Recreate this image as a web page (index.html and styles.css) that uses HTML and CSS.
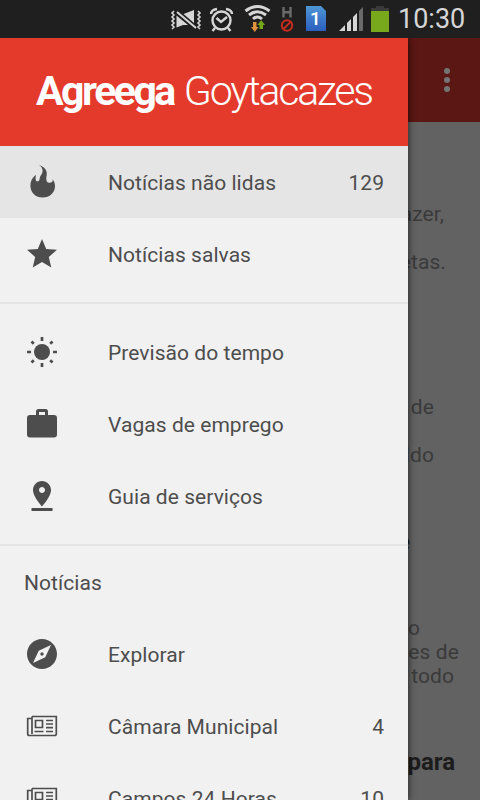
FILE: index.html
```html
<!DOCTYPE html>
<html lang="pt-BR">
<head>
    <meta charset="UTF-8">
    <meta name="viewport" content="width=device-width, initial-scale=1.0">
    <title>Agreega Goytacazes</title>
    <link rel="stylesheet" href="styles.css">
</head>
<body>

    <!-- Status bar -->
    <div class="status-bar">
        <svg class="status-icons" width="222" height="38" viewBox="168 0 222 38">
            <!-- Vibrate / muted -->
            <g fill="none" stroke="#d6d6d6" stroke-width="1.600">
                <path d="M174 11l-2 2 2 2-2 2 2 2-2 2 2 2-2 2 2 2-2 2M198 11l2 2-2 2 2 2-2 2 2 2-2 2 2 2-2 2 2 2"/>
                <path d="M177 12l19 16" stroke-width="2"/>
            </g>
            <path fill="#d6d6d6" d="M176.500 15.500L188 25h-5l-6.500 2.500zM183.500 14l10.500-4v13z"/>
            <!-- Alarm -->
            <g fill="none" stroke="#d6d6d6" stroke-width="2.400">
                <circle cx="221.500" cy="20.500" r="9"/>
                <path d="M216.500 18l4.500 4 6-5M211 14q0-4 6-5M232 14q0-4-6-5M215 28l-2.500 3M228 28l2.500 3"/>
            </g>
            <!-- Wifi -->
            <g fill="none" stroke="#d6d6d6" stroke-width="3">
                <path d="M245.500 11q12-9 24 0M249 15q8.500-6.500 17 0M253 19q4.500-4 9 0"/>
            </g>
            <path fill="#e0913b" d="M253 22h3.500v5h2l-3.700 5-3.800-5h2z"/>
            <path fill="#74a818" d="M259.500 29h3.500v-4h2l-3.800-5-3.700 5h2z"/>
            <!-- Network type -->
            <path d="M283.500 7v10.500M290.500 7v10.500M283.500 12.200h7" fill="none" stroke="#6a6a6a" stroke-width="2.400"/>
            <g fill="none" stroke="#c52c1e" stroke-width="2">
                <circle cx="287" cy="25.500" r="5.200"/>
                <path d="M283.500 29l7-7"/>
            </g>
            <!-- SIM card -->
            <defs>
                <linearGradient id="sim" x1="0" y1="0" x2="0" y2="1">
                    <stop offset="0" stop-color="#4e95d6"/>
                    <stop offset="1" stop-color="#2b5fbd"/>
                </linearGradient>
            </defs>
            <path fill="url(#sim)" d="M306 6h15l5 5v20h-20z"/>
            <text class="sim-number" x="315.500" y="25" text-anchor="middle">1</text>
            <!-- Signal -->
            <path fill="#d6d6d6" d="M339 31l6-6v6zM347 31v-8l4-4v12zM353 31V17l4-4v18z"/>
            <path fill="#6a6a6a" d="M359 31V11l4-4v24z"/>
            <!-- Battery -->
            <path fill="#3a3a3a" d="M371 11V8h5V6h8v2h5v3z"/>
            <path fill="#78a81b" d="M371 11h18v21h-18z"/>
        </svg>
        <div class="clock">10:30</div>
    </div>

    <div class="screen">
        <!-- News page -->
        <div class="toolbar">
            <svg width="6" height="26" viewBox="0 0 6 26" fill="#747474">
                <circle cx="3" cy="4" r="3"/>
                <circle cx="3" cy="13" r="3"/>
                <circle cx="3" cy="22" r="3"/>
            </svg>
        </div>
        <div class="feed">
            <p class="story story-first">azer,<br><span>etas.</span></p>
            <p class="story story-second">de<br>ldo</p>
            <h2 class="title title-first">e</h2>
            <p class="summary"><span class="short">o</span><br>es de<br><span class="todo">todo</span></p>
            <h2 class="title title-second">para</h2>
        </div>

        <!-- Drawer -->
        <div class="drawer">
            <div class="brand"><b>Agreega</b><span>Goytacazes</span></div>
            <div class="menu">
                <div class="menu-item active">
                    <svg class="icon" viewBox="0 0 36 36"><path d="M15 1C20.500 3 23.500 6.500 22.700 11 22 15 22 18.500 25 18.800 27.500 19 29 17.800 28.700 15.500 30.300 17.300 31 19.500 31 22 31 28.700 25.700 33.600 18.700 33.600S6.400 28.700 6.400 21.500C6.400 17 8.300 13.500 12 10.700 11.500 13.500 11 17.300 13.500 17.300 15.700 17.300 15.500 15 16 13 16.500 11 18.500 10 18.600 7 18.700 4.500 17.500 2.500 15 1z"/></svg>
                    <span class="label">Notícias não lidas</span>
                    <span class="count">129</span>
                </div>
                <div class="menu-item">
                    <svg class="icon" viewBox="0 0 24 24"><path d="M12 17.270L18.180 21l-1.640-7.030L22 9.240l-7.190-.61L12 2 9.190 8.630 2 9.240l5.460 4.730L5.820 21z"/></svg>
                    <span class="label">Notícias salvas</span>
                </div>
            </div>
            <div class="menu">
                <div class="menu-item">
                    <svg class="icon" viewBox="0 0 36 36">
                        <circle cx="18" cy="18" r="8"/>
                        <path d="M18 3v4M18 29v4M3 18h4M29 18h4M7.500 7.500l2.300 2.300M26.200 26.200l2.300 2.300M28.500 7.500l-2.300 2.300M9.800 26.200l-2.300 2.300" fill="none" stroke="#4d4d4d" stroke-width="2.700"/>
                    </svg>
                    <span class="label">Previsão do tempo</span>
                </div>
                <div class="menu-item">
                    <svg class="icon" viewBox="0 0 36 36"><path fill-rule="evenodd" d="M12 9V5.500Q12 3 14.500 3h7Q24 3 24 5.500V9h6q3 0 3 3v16.500q0 3-3 3H6q-3 0-3-3V12q0-3 3-3zM15 9h6V6h-6z"/></svg>
                    <span class="label">Vagas de emprego</span>
                </div>
                <div class="menu-item">
                    <svg class="icon" viewBox="0 0 24 24"><path d="M18 8c0-3.310-2.690-6-6-6S6 4.690 6 8c0 4.500 6 11 6 11s6-6.500 6-11zm-8 0c0-1.100.9-2 2-2s2 .9 2 2-.89 2-2 2c-1.100 0-2-.9-2-2zM5 20v2h14v-2H5z"/></svg>
                    <span class="label">Guia de serviços</span>
                </div>
            </div>
            <div class="menu">
                <div class="menu-heading">Notícias</div>
                <div class="menu-item">
                    <svg class="icon" viewBox="0 0 24 24"><path d="M12 10.900c-.61 0-1.100.49-1.100 1.100s.49 1.100 1.100 1.100c.61 0 1.100-.49 1.100-1.100s-.49-1.100-1.100-1.100zM12 2C6.480 2 2 6.480 2 12s4.480 10 10 10 10-4.480 10-10S17.520 2 12 2zm2.190 12.190L6 18l3.810-8.190L18 6l-3.810 8.190z"/></svg>
                    <span class="label">Explorar</span>
                </div>
                <div class="menu-item">
                    <svg class="icon news" viewBox="0 0 36 36"><path d="M8 8.500h24.300v17.300q0 1.700-1.700 1.700H5.500q-1.800 0-1.800-1.800V10.500H8M8 8.500V26"/><path d="M11.500 12.500h7v7h-7zM10.500 23.500h9M22 12.500h7M22 16h7M22 19.700h7M22 23.500h7"/></svg>
                    <span class="label">Câmara Municipal</span>
                    <span class="count">4</span>
                </div>
                <div class="menu-item">
                    <svg class="icon news" viewBox="0 0 36 36"><path d="M8 8.500h24.300v17.300q0 1.700-1.700 1.700H5.500q-1.800 0-1.800-1.800V10.500H8M8 8.500V26"/><path d="M11.500 12.500h7v7h-7zM10.500 23.500h9M22 12.500h7M22 16h7M22 19.700h7M22 23.500h7"/></svg>
                    <span class="label">Campos 24 Horas</span>
                    <span class="count">10</span>
                </div>
            </div>
        </div>
    </div>

</body>
</html>
```
FILE: styles.css
```css
body {
    font-family: Roboto, sans-serif;
    margin: 0;
    height: 800px;
    overflow: hidden;
    background-color: #626262;
}

/* Status bar */
.status-bar {
    height: 38px;
    background-color: #1f1f1f;
    display: flex;
    justify-content: flex-end;
    padding-right: 16px;
}

.status-icons {
    flex: none;
}

.sim-number {
    font-size: 19px;
    font-weight: 500;
    fill: white;
}

.clock {
    width: 66px;
    margin-left: 8px;
    font-size: 27px;
    line-height: 38px;
    white-space: nowrap;
    color: #d6d6d6;
}

.screen {
    position: relative;
    height: 762px;
    overflow: hidden;
}

/* News page */
.toolbar {
    height: 84px;
    background-color: #5b1713;
    display: flex;
    justify-content: flex-end;
    align-items: center;
    padding-right: 30px;
}

.feed {
    text-align: right;
    font-size: 21px;
    letter-spacing: 0.1px;
    color: #3a3a3a;
}

.story {
    margin: 0;
    line-height: 48px;
}

.story-first {
    padding: 68px 36px 0 0;
}

.story-first span {
    margin-right: -2px;
}

.story-second {
    padding: 97px 46px 0 0;
}

.title {
    margin: 0;
    font-size: 24px;
    line-height: 28px;
    letter-spacing: 0;
    color: #1c1c1c;
}

.title-first {
    padding: 49px 70px 0 0;
}

.summary {
    margin: 0;
    padding: 60px 21px 0 0;
    line-height: 24px;
}

.short {
    margin-right: 39px;
}

.todo {
    margin-right: 5px;
}

.title-second {
    padding: 60px 25px 0 0;
}

/* Drawer */
.drawer {
    position: absolute;
    top: 0;
    left: 0;
    width: 408px;
    height: 762px;
    background-color: #f1f1f1;
    box-shadow: 0 0 7px rgba(0, 0, 0, 0.7);
    color: #4d4d4d;
    font-size: 21px;
    letter-spacing: 0.05px;
}

.brand {
    height: 106px;
    padding-bottom: 2px;
    background-color: #e43a2c;
    color: white;
    display: flex;
    justify-content: center;
    align-items: center;
    gap: 10px;
    font-size: 41px;
    letter-spacing: -2.2px;
}

.brand b {
    letter-spacing: -2.5px;
}

.brand span {
    font-weight: 300;
}

.menu + .menu {
    border-top: 2px solid #e4e4e4;
    margin-top: 12px;
    padding-top: 12px;
}

.menu-item {
    height: 72px;
    padding: 0 24px;
    display: flex;
    align-items: center;
}

.menu-item.active {
    background-color: #e5e5e5;
}

.menu-heading {
    height: 60px;
    padding-left: 24px;
    line-height: 51px;
}

.icon {
    width: 36px;
    height: 36px;
    margin-right: 48px;
    fill: #4d4d4d;
}

.news {
    fill: none;
    stroke: #4d4d4d;
    stroke-width: 1.7;
}

.label {
    flex: 1;
}

.label,
.count {
    padding-top: 2px;
}
```
